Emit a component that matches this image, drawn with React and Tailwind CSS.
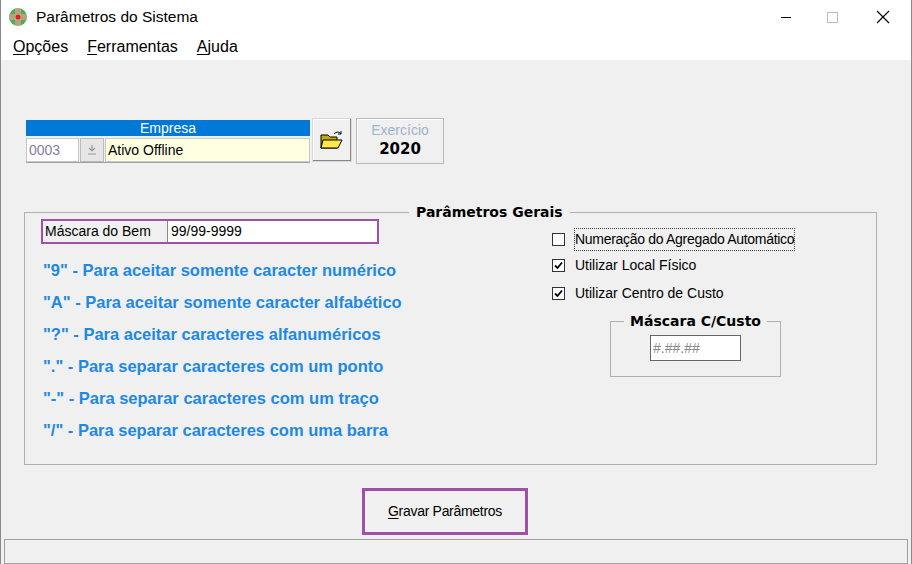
import React from 'react';

const font = { fontFamily: 'Tahoma, "DejaVu Sans", "Liberation Sans", sans-serif' };

const U = ({ children }) => <span className="underline underline-offset-2">{children}</span>;

const Check = ({ checked }) => (
  <span className="w-[13px] h-[13px] border border-[#333] bg-white flex items-center justify-center">
    {checked && (
      <svg width="9" height="9" viewBox="0 0 9 9">
        <path d="M1 4.5 L3.5 7 L8 1.5" stroke="#000" strokeWidth="1.8" fill="none" />
      </svg>
    )}
  </span>
);

const helpLines = [
  '"9" - Para aceitar somente caracter numérico',
  '"A" - Para aceitar somente caracter alfabético',
  '"?" - Para aceitar caracteres alfanuméricos',
  '"." - Para separar caracteres com um ponto',
  '"-" - Para separar caracteres com um traço',
  '"/" - Para separar caracteres com uma barra',
];

export default function App() {
  return (
    <div className="w-[912px] h-[564px] bg-white flex flex-col overflow-hidden border-x border-[#8a8a8a]" style={{ fontFamily: '"Liberation Sans", Arial, sans-serif' }}>
      {/* title bar */}
      <div className="h-[34px] flex items-center pl-[7px] shrink-0">
        <svg width="20" height="20" viewBox="0 0 20 20">
          <circle cx="10" cy="10" r="9" fill="#4caf50" />
          <rect x="1" y="7" width="18" height="6" fill="#f2a0a0" opacity="0.6" />
          <rect x="7" y="1" width="6" height="18" fill="#f2a0a0" opacity="0.6" />
          <circle cx="10" cy="10" r="2.5" fill="#e02020" />
        </svg>
        <span className="ml-[8px] text-[15.5px] text-black">Parâmetros do Sistema</span>
        <div className="ml-auto flex items-center text-[#222]">
          <span className="w-[46px] flex justify-center"><span className="w-[10px] h-px bg-black" /></span>
          <span className="w-[46px] flex justify-center"><span className="w-[11px] h-[11px] border border-[#bbb]" /></span>
          <span className="w-[56px] flex justify-center">
            <svg width="14" height="14" viewBox="0 0 14 14"><path d="M1 1L13 13M13 1L1 13" stroke="#000" strokeWidth="1.2" /></svg>
          </span>
        </div>
      </div>
      {/* menu */}
      <div className="h-[26px] flex items-center gap-[19px] pl-[12px] text-[16px] shrink-0">
        <span><U>O</U>pções</span>
        <span><U>F</U>erramentas</span>
        <span><U>A</U>juda</span>
      </div>
      {/* content */}
      <div className="flex-1 bg-[#f0f0f0] flex flex-col text-[14px]">
        <div className="flex items-start mt-[58px] ml-[25px]">
          <div className="w-[284px] border-b border-[#a0a0a0] mt-[2px]">
            <div className="h-[16px] bg-[#0078d7] text-white text-[14px] leading-[16px] text-center">Empresa</div>
            <div className="flex h-[24px] mt-[2px] gap-[1px]">
              <div className="w-[53px] border border-[#c8c8c8] bg-white text-[#8a7ca0] text-[14px] leading-[22px] pl-[2px]">0003</div>
              <div className="w-[24px] bg-[#e6e6e6] border border-[#bbb] flex items-center justify-center">
                <svg width="10" height="10" viewBox="0 0 10 10"><path d="M5 0V6M2 3L5 6L8 3M1 9H9" stroke="#999" strokeWidth="1.2" fill="none" /></svg>
              </div>
              <div className="flex-1 bg-[#ffffe1] border border-[#c8c8c8] leading-[22px] pl-[2px] text-[14px]">Ativo Offline</div>
            </div>
          </div>
          <div className="w-[40px] h-[44px] ml-[2px] bg-[#f0f0f0] border border-[#d8d8d8] shadow-[inset_-1px_-1px_0_#888,inset_1px_1px_0_#fff] flex items-center justify-center">
            <svg width="24" height="20" viewBox="0 0 24 20">
              <path d="M1 5H8L10 7H17V18H1Z" fill="#c8a800" stroke="#000" strokeWidth="1" />
              <path d="M3 10H22L18 18H1Z" fill="#ffe84a" stroke="#000" strokeWidth="1" />
              <path d="M14 4Q18 0 21 4L21 1M21 4L18 4" stroke="#000" fill="none" strokeWidth="1" />
            </svg>
          </div>
          <div className="w-[88px] h-[46px] ml-[4px] border border-[#b8b8b8] shadow-[inset_1px_1px_0_#fff] flex flex-col items-center">
            <span className="text-[#a0b4cc] text-[14px] leading-[18px] mt-[2px]">Exercício</span>
            <span className="font-bold text-[15px] leading-[20px]" style={font}>2020</span>
          </div>
        </div>

        <fieldset className="ml-[23px] w-[853px] h-[263px] mt-[38px] border border-[#b0b0b0] px-[16px] flex">
          <legend className="ml-[368px] px-[7px] font-bold text-[14px]" style={font}>Parâmetros Gerais</legend>
          <div className="flex w-full -mt-[4px]">
            <div className="w-[500px]">
              <div className="w-[338px] h-[25px] border-2 border-[#a050a8] flex bg-white">
                <div className="w-[125px] bg-[#f0f0f0] border-r border-[#888] pl-[2px] leading-[21px]">Máscara do Bem</div>
                <div className="pl-[3px] leading-[21px]">99/99-9999</div>
              </div>
              <div className="flex flex-col gap-[12px] mt-[16px] pl-[2px]">
                {helpLines.map((l) => (
                  <div key={l} className="text-[#1e88e5] font-bold text-[16.5px] leading-[20px]">{l}</div>
                ))}
              </div>
            </div>
            <div className="flex flex-col pl-[11px] text-[14px]">
              <div className="flex items-center gap-[10px] h-[24px] mt-[8px]">
                <Check />
                <span className="outline outline-1 outline-dotted outline-[#444] tracking-[-0.3px]">Numeração do Agregado Automático</span>
              </div>
              <div className="flex items-center gap-[10px] h-[28px]"><Check checked /><span>Utilizar Local Físico</span></div>
              <div className="flex items-center gap-[10px] h-[28px]"><Check checked /><span>Utilizar Centro de Custo</span></div>
              <fieldset className="ml-[58px] w-[171px] h-[66px] border border-[#b0b0b0] flex flex-col items-center mt-[4px]">
                <legend className="mx-auto px-[6px] font-bold text-[14px]" style={font}>Máscara C/Custo</legend>
                <div className="w-[91px] h-[26px] border border-[#666] bg-white text-[#888] leading-[24px] pl-[2px] mt-[3px]">#.##.##</div>
              </fieldset>
            </div>
          </div>
        </fieldset>

        <div className="flex mt-[23px] ml-[361px]">
          <div className="w-[166px] h-[47px] border-[3px] border-[#a050a8] bg-[#f0f0f0] flex items-center justify-center text-[14px] tracking-[-0.3px]">
            <span><U>G</U>ravar Parâmetros</span>
          </div>
        </div>
        <div className="mt-[4px] mx-[3px] h-[25px] border border-[#a0a0a0] mb-[2px]" />
      </div>
    </div>
  );
}
